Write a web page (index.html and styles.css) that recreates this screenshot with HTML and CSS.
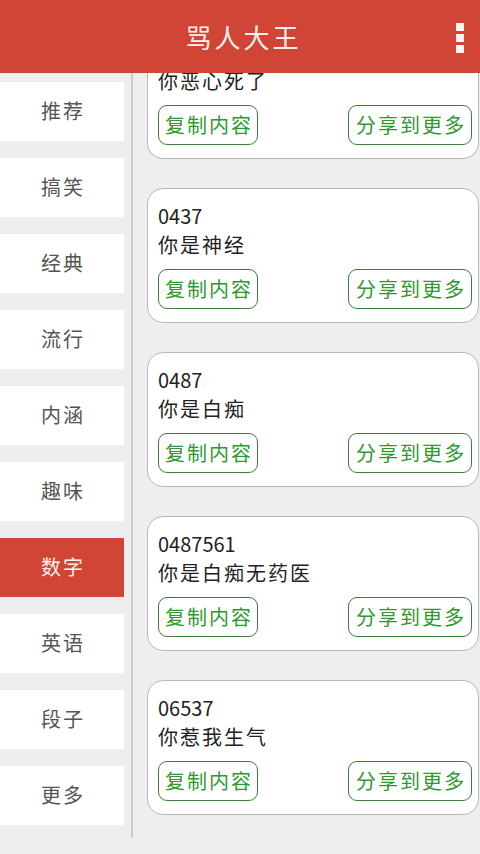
FILE: index.html
```html
<!DOCTYPE html>
<html lang="zh-CN">
<head>
<meta charset="utf-8">
<title>骂人大王</title>
<link rel="stylesheet" href="styles.css">
</head>
<body>
<header class="topbar">
  <div class="topbar-side"></div>
  <h1 class="title">骂人大王</h1>
  <div class="topbar-side topbar-right">
    <div class="menu-icon" aria-label="更多选项">
      <span class="dot"></span><span class="dot"></span><span class="dot"></span>
    </div>
  </div>
</header>
<main class="main">
  <nav class="sidebar">
    <div class="cat">推荐</div>
    <div class="cat">搞笑</div>
    <div class="cat">经典</div>
    <div class="cat">流行</div>
    <div class="cat">内涵</div>
    <div class="cat">趣味</div>
    <div class="cat cat-active">数字</div>
    <div class="cat">英语</div>
    <div class="cat">段子</div>
    <div class="cat">更多</div>
  </nav>
  <section class="list">
    <div class="list-inner">
      <article class="card card-partial">
        <div class="text">你恶心死了</div>
        <div class="actions"><button class="btn btn-copy">复制内容</button><button class="btn btn-share">分享到更多</button></div>
      </article>
      <article class="card">
        <div class="num">0437</div>
        <div class="text">你是神经</div>
        <div class="actions"><button class="btn btn-copy">复制内容</button><button class="btn btn-share">分享到更多</button></div>
      </article>
      <article class="card">
        <div class="num">0487</div>
        <div class="text">你是白痴</div>
        <div class="actions"><button class="btn btn-copy">复制内容</button><button class="btn btn-share">分享到更多</button></div>
      </article>
      <article class="card">
        <div class="num">0487561</div>
        <div class="text">你是白痴无药医</div>
        <div class="actions"><button class="btn btn-copy">复制内容</button><button class="btn btn-share">分享到更多</button></div>
      </article>
      <article class="card">
        <div class="num">06537</div>
        <div class="text">你惹我生气</div>
        <div class="actions"><button class="btn btn-copy">复制内容</button><button class="btn btn-share">分享到更多</button></div>
      </article>
    </div>
  </section>
</main>
</body>
</html>
```
FILE: styles.css
```css
* { box-sizing: border-box; }
html, body { margin: 0; padding: 0; }
body {
  width: 480px;
  height: 854px;
  overflow: hidden;
  background: #eeeeee;
  font-family: "Noto Sans CJK SC", "Noto Sans", sans-serif;
}
.topbar {
  height: 73px;
  background: #d14536;
  display: grid;
  grid-template-columns: 1fr auto 1fr;
  align-items: center;
}
.title {
  margin: 0;
  font-size: 26px;
  font-weight: 400;
  letter-spacing: 3px;
  color: #fdf1ec;
  line-height: 1;
  padding-left: 7px;
}
.topbar-right {
  display: flex;
  justify-content: flex-end;
  padding-right: 16px;
}
.menu-icon {
  display: flex;
  flex-direction: column;
  gap: 3px;
  padding-top: 2px;
}
.dot {
  width: 8px;
  height: 8px;
  background: #fdf4f0;
}
.main {
  display: flex;
  height: 781px;
}
.sidebar {
  width: 133px;
  flex: none;
  align-self: flex-start;
  padding: 9px 0 13px 0;
  border-right: 2px solid #cbcbcb;
  display: flex;
  flex-direction: column;
  gap: 17px;
}
.cat {
  width: 124px;
  height: 59px;
  background: #ffffff;
  color: #555555;
  font-size: 20px;
  letter-spacing: 2px;
  padding: 0 0 2px 2px;
  display: flex;
  align-items: center;
  justify-content: center;
}
.cat-active {
  background: #d14536;
  color: #fdf1ec;
}
.list {
  flex: 1;
  height: 781px;
  overflow: hidden;
  padding: 0 1px 0 14px;
}
.list-inner {
  display: flex;
  flex-direction: column;
  gap: 29px;
}
.card {
  height: 135px;
  background: #ffffff;
  border: 1.5px solid #b9b9b9;
  border-radius: 16px;
  padding: 13px 6px 0 10px;
}
.card-partial {
  height: 93px;
  border-top: none;
  border-radius: 0 0 16px 16px;
  padding-top: 0;
  margin-top: -7px;
}
.num {
  font-size: 20px;
  line-height: 28px;
  color: #222222;
}
.text {
  font-size: 20px;
  line-height: 29px;
  letter-spacing: 2px;
  color: #222222;
}
.actions {
  margin-top: 10px;
  display: flex;
  justify-content: space-between;
}
.btn {
  height: 40px;
  padding: 0 0 0 2px;
  background: #ffffff;
  border: 1.5px solid #3f7d3f;
  border-radius: 9px;
  color: #2f982f;
  font-family: "Noto Sans CJK SC", "Noto Sans", sans-serif;
  font-size: 20px;
  letter-spacing: 2px;
  line-height: 1;
  cursor: pointer;
  display: flex;
  align-items: center;
  justify-content: center;
}
.btn-copy { width: 100px; }
.btn-share { width: 124px; }
```
